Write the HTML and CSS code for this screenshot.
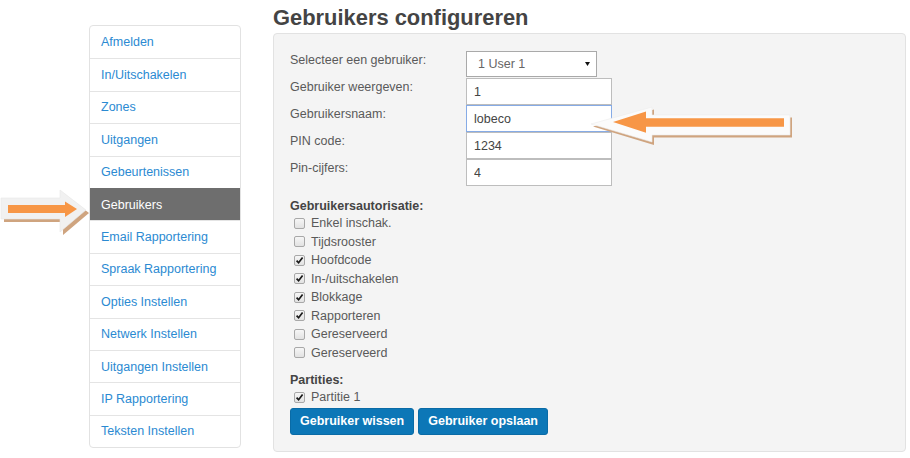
FILE: index.html
```html
<!DOCTYPE html>
<html lang="nl">
<head>
<meta charset="utf-8">
<title>Gebruikers configureren</title>
<link rel="stylesheet" href="styles.css">
</head>
<body>
<div class="page">
  <nav class="sidebar">
    <a class="item">Afmelden</a>
    <a class="item">In/Uitschakelen</a>
    <a class="item">Zones</a>
    <a class="item">Uitgangen</a>
    <a class="item">Gebeurtenissen</a>
    <a class="item active">Gebruikers</a>
    <a class="item">Email Rapportering</a>
    <a class="item">Spraak Rapportering</a>
    <a class="item">Opties Instellen</a>
    <a class="item">Netwerk Instellen</a>
    <a class="item">Uitgangen Instellen</a>
    <a class="item">IP Rapportering</a>
    <a class="item">Teksten Instellen</a>
  </nav>
  <main class="main">
    <h1 class="title">Gebruikers configureren</h1>
    <div class="panel">
      <div class="form-grid">
        <label class="lbl">Selecteer een gebruiker:</label>
        <div class="select"><span>1 User 1</span><svg class="caret" width="5" height="4" viewBox="0 0 5 4"><path d="M0 0H5L2.5 4Z" fill="#111"/></svg></div>
        <label class="lbl">Gebruiker weergeven:</label>
        <input class="field" type="text" value="1">
        <label class="lbl">Gebruikersnaam:</label>
        <input class="field focus" type="text" value="lobeco">
        <label class="lbl">PIN code:</label>
        <input class="field" type="text" value="1234">
        <label class="lbl">Pin-cijfers:</label>
        <input class="field" type="text" value="4">
      </div>
      <div class="section-title">Gebruikersautorisatie:</div>
      <ul class="checks">
        <li><span class="cb"></span>Enkel inschak.</li>
        <li><span class="cb"></span>Tijdsrooster</li>
        <li><span class="cb on"><svg viewBox="0 0 11 11"><path d="M2.6 5.6L4.6 7.8L8.6 2.6" fill="none" stroke="#1a1a1a" stroke-width="1.7"/></svg></span>Hoofdcode</li>
        <li><span class="cb on"><svg viewBox="0 0 11 11"><path d="M2.6 5.6L4.6 7.8L8.6 2.6" fill="none" stroke="#1a1a1a" stroke-width="1.7"/></svg></span>In-/uitschakelen</li>
        <li><span class="cb on"><svg viewBox="0 0 11 11"><path d="M2.6 5.6L4.6 7.8L8.6 2.6" fill="none" stroke="#1a1a1a" stroke-width="1.7"/></svg></span>Blokkage</li>
        <li><span class="cb on"><svg viewBox="0 0 11 11"><path d="M2.6 5.6L4.6 7.8L8.6 2.6" fill="none" stroke="#1a1a1a" stroke-width="1.7"/></svg></span>Rapporteren</li>
        <li><span class="cb"></span>Gereserveerd</li>
        <li><span class="cb"></span>Gereserveerd</li>
      </ul>
      <div class="section-title second">Partities:</div>
      <ul class="checks">
        <li><span class="cb on"><svg viewBox="0 0 11 11"><path d="M2.6 5.6L4.6 7.8L8.6 2.6" fill="none" stroke="#1a1a1a" stroke-width="1.7"/></svg></span>Partitie 1</li>
      </ul>
      <div class="buttons">
        <button class="btn">Gebruiker wissen</button>
        <button class="btn">Gebruiker opslaan</button>
      </div>
    </div>
  </main>

  <svg class="arrow arrow-left" width="92" height="52" viewBox="0 185 92 52">
    <polygon points="4,201 63,201 63,193 89,213 63,235 63,222 4,222" fill="#cfa47f"/>
    <polygon points="1,198 60,198 60,190 86,210 60,232 60,219 1,219" fill="#f1f1f1" stroke="#e8e8e8" stroke-width="0.6"/>
    <polygon points="8,205 65,205 65,201.5 77,209 65,217 65,213 8,213" fill="#f79646"/>
  </svg>

  <svg class="arrow arrow-right" width="208" height="46" viewBox="588 102 208 46">
    <polygon points="593,126.5 654,109.5 654,117.5 792,117.5 792,137.5 654,137.5 654,145" fill="#cfa47f"/>
    <polygon points="591,124 652,107 652,115 790,115 790,135 652,135 652,142" fill="#fbfbfb" stroke="#ededed" stroke-width="0.6"/>
    <polygon points="613,122 646,111.5 646,118.3 784,118.3 784,126.7 646,126.7 646,132.7" fill="#f79646"/>
  </svg>
</div>
</body>
</html>
```
FILE: styles.css
```css
* {
  box-sizing: border-box;
}

html, body {
  margin: 0;
  padding: 0;
  background: #ffffff;
}

body {
  font-family: "Liberation Sans", Arial, sans-serif;
  font-size: 12.5px;
  color: #555;
}

.page {
  position: relative;
  display: flex;
  align-items: flex-start;
  gap: 32px;
  padding-left: 89px;
  width: 910px;
  height: 458px;
}

/* Sidebar */
.sidebar {
  width: 152px;
  margin-top: 25px;
  border: 1px solid #e2e2e2;
  border-radius: 4px;
  overflow: hidden;
  background: #fff;
  display: flex;
  flex-direction: column;
}

.item {
  display: flex;
  align-items: center;
  height: 32.4px;
  padding-left: 11px;
  border-top: 1px solid #e4e4e4;
  color: #2b8ad2;
  font-size: 12.5px;
  text-decoration: none;
  cursor: pointer;
}

.item:first-child {
  border-top: none;
}

.item.active {
  background: #6e6e6e;
  color: #fff;
  border-top-color: #6e6e6e;
}

/* Main */
.main {
  width: 633px;
}

.title {
  margin: 0;
  padding-top: 3px;
  height: 33px;
  line-height: 30px;
  font-size: 21.9px;
  font-weight: bold;
  color: #444;
}

.panel {
  background: #f4f4f4;
  border: 1px solid #e2e2e2;
  border-radius: 4px;
  padding: 17px 16px 16px 16px;
}

.form-grid {
  display: grid;
  grid-template-columns: 176px 146px;
  grid-auto-rows: 27px;
}

.lbl {
  line-height: 18px;
  color: #5a5a5a;
  font-size: 12.5px;
}

.select {
  height: 26px;
  width: 131px;
  background: #fff;
  border: 1px solid #a9a9a9;
  display: flex;
  align-items: center;
  justify-content: space-between;
  padding: 0 6px 0 11px;
  color: #666;
  font-size: 12.5px;
}

.caret {
  display: block;
}

.field {
  height: 27px;
  width: 146px;
  margin: 0;
  border: 1px solid #bdbdbd;
  background: #fff;
  padding: 0 7px;
  font-family: "Liberation Sans", Arial, sans-serif;
  font-size: 12.5px;
  color: #444;
  outline: none;
}

.field.focus {
  border-color: #86abe6;
}

.section-title {
  margin-top: 12px;
  line-height: 16px;
  font-weight: bold;
  color: #444;
}

.section-title.second {
  margin-top: 10px;
}

.checks {
  list-style: none;
  margin: 0;
  padding: 0;
}

.checks li {
  height: 18.5px;
  display: flex;
  align-items: center;
  color: #5a5a5a;
}

.cb {
  width: 11px;
  height: 11px;
  margin-left: 4px;
  margin-right: 6px;
  border: 1px solid #a8a8a8;
  border-radius: 2px;
  background: linear-gradient(#f6f6f6, #e2e2e2);
  display: flex;
  align-items: center;
  justify-content: center;
  position: relative;
}

.cb svg {
  position: absolute;
  left: -1px;
  top: -1px;
  width: 11px;
  height: 11px;
}

.buttons {
  display: flex;
  gap: 4px;
  margin-top: 1px;
}

.btn {
  height: 27.5px;
  padding: 0 9px;
  border: 1px solid #0a6ba6;
  border-radius: 3px;
  background: #0c77b7;
  color: #fff;
  font-family: "Liberation Sans", Arial, sans-serif;
  font-size: 12.5px;
  font-weight: bold;
  cursor: pointer;
}

/* Annotation arrows (overlay) */
.arrow {
  position: absolute;
  display: block;
}

.arrow-left {
  left: 0;
  top: 185px;
}

.arrow-right {
  left: 588px;
  top: 102px;
}
```
